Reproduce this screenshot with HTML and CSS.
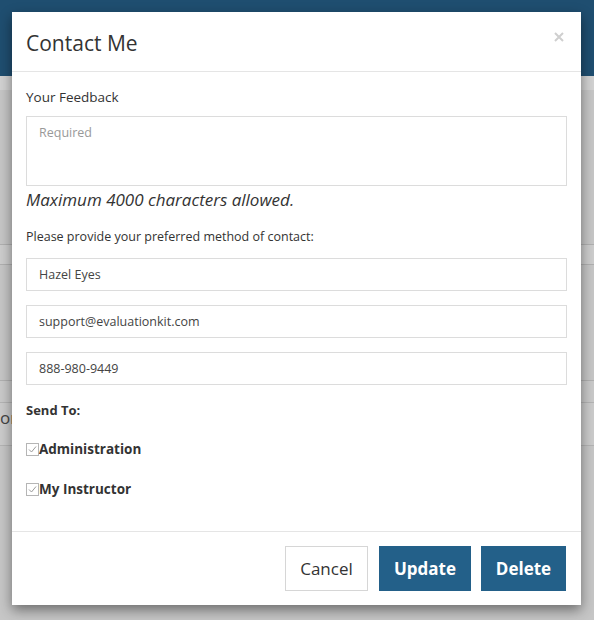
FILE: index.html
```html
<!DOCTYPE html>
<html lang="en">
<head>
<meta charset="utf-8">
<title>Contact Me</title>
<link rel="stylesheet" href="styles.css">
</head>
<body>
<div class="page">
  <div class="topbar"></div>
  <div class="subbar"></div>
  <div class="spacer-a"></div>
  <div class="row row-a"></div>
  <div class="spacer-b"></div>
  <div class="row row-b"></div>
  <div class="row row-c"><span class="bg-text">or</span></div>
  <div class="rest"></div>
</div>

<div class="modal">
  <div class="modal-header">
    <h4 class="modal-title">Contact Me</h4>
    <span class="close" aria-label="Close">
      <svg width="10" height="10" viewBox="0 0 10 10"><path d="M1 1 L9 9 M9 1 L1 9" stroke="#cfcfcf" stroke-width="2" fill="none"/></svg>
    </span>
  </div>
  <div class="modal-body">
    <div class="label">Your Feedback</div>
    <div class="textarea"><span class="placeholder">Required</span></div>
    <div class="hint">Maximum 4000 characters allowed.</div>
    <div class="prompt">Please provide your preferred method of contact:</div>
    <div class="input">Hazel Eyes</div>
    <div class="input">support@evaluationkit.com</div>
    <div class="input">888-980-9449</div>
    <div class="sendto">Send To:</div>
    <div class="check"><span class="box"><svg width="11" height="11" viewBox="0 0 11 11"><path d="M2 5.5 L4.5 8 L9 2.5" stroke="#9a9a9a" stroke-width="1" fill="none"/></svg></span>Administration</div>
    <div class="check"><span class="box"><svg width="11" height="11" viewBox="0 0 11 11"><path d="M2 5.5 L4.5 8 L9 2.5" stroke="#9a9a9a" stroke-width="1" fill="none"/></svg></span>My Instructor</div>
  </div>
  <div class="modal-footer">
    <button class="btn btn-default">Cancel</button>
    <button class="btn btn-primary">Update</button>
    <button class="btn btn-primary">Delete</button>
  </div>
</div>
</body>
</html>
```
FILE: styles.css
```css
html, body {
  margin: 0;
  padding: 0;
}
body {
  background: #c6c6c6;
  font-family: "Open Sans", "Noto Sans", sans-serif;
  color: #333;
  width: 594px;
  height: 620px;
  overflow: hidden;
  position: relative;
}
.page {
  display: flex;
  flex-direction: column;
}
.topbar {
  height: 76px;
  background: #1f4e70;
}
.subbar {
  height: 14px;
  background: #d2d2d2;
}
.spacer-a {
  height: 154px;
}
.row-a {
  height: 19px;
  border-top: 1px solid #b0b0b0;
  border-bottom: 1px solid #b0b0b0;
  background: #cdcdcd;
}
.spacer-b {
  height: 115px;
}
.row-b {
  height: 21px;
  border-top: 1px solid #b0b0b0;
  background: #c9c9c9;
}
.row-c {
  height: 42px;
  border-top: 1px solid #b4b4b4;
  border-bottom: 1px solid #b4b4b4;
  background: #cbcbcb;
  display: flex;
  align-items: flex-start;
}
.bg-text {
  font-size: 17px;
  line-height: 24px;
  margin-top: 3px;
  color: #444;
  margin-left: 0;
}
.rest {
  flex: 1;
}

.modal {
  position: absolute;
  left: 12px;
  top: 12px;
  width: 569px;
  height: 593px;
  background: #fff;
  box-shadow: 0 5px 12px rgba(0, 0, 0, 0.45);
  display: flex;
  flex-direction: column;
}
.modal-header {
  height: 59px;
  border-bottom: 1px solid #e5e5e5;
  display: flex;
  align-items: flex-start;
  justify-content: space-between;
  padding: 0 17px 0 14px;
}
.modal-title {
  margin: 17px 0 0 0;
  font-size: 21px;
  font-weight: 400;
  line-height: 28px;
  color: #333;
}
.close {
  margin-top: 20px;
  display: flex;
}
.modal-body {
  padding: 15px 14px 0 14px;
  flex: 1;
  display: flex;
  flex-direction: column;
}
.label {
  font-size: 13.5px;
  line-height: 20px;
}
.textarea {
  margin-top: 9px;
  height: 68px;
  border: 1px solid #dcdcdc;
  padding: 0 12px;
}
.placeholder {
  display: block;
  margin-top: 7px;
  font-size: 12.5px;
  line-height: 18px;
  color: #999;
}
.hint {
  margin-top: 2px;
  font-size: 17px;
  font-style: italic;
  line-height: 24px;
  color: #333;
}
.prompt {
  margin-top: 16px;
  font-size: 12.5px;
  line-height: 18px;
}
.input {
  margin-top: 12px;
  height: 31px;
  border: 1px solid #dcdcdc;
  padding: 0 12px;
  font-size: 12.5px;
  line-height: 31px;
  color: #444;
}
.input + .input {
  margin-top: 14px;
}
.sendto {
  margin-top: 16px;
  font-size: 13px;
  font-weight: 700;
  line-height: 18px;
}
.check {
  margin-top: 21px;
  font-size: 13.5px;
  font-weight: 700;
  line-height: 18px;
  display: flex;
  align-items: center;
}
.check + .check {
  margin-top: 22px;
}
.box {
  width: 11px;
  height: 11px;
  border: 1px solid #b5b5b5;
  display: flex;
  margin-right: 0;
}
.modal-footer {
  height: 74px;
  border-top: 1px solid #e5e5e5;
  display: flex;
  justify-content: flex-end;
  align-items: flex-start;
  gap: 11px;
  padding: 14px 15px 0 0;
  box-sizing: border-box;
}
.btn {
  height: 45px;
  font-family: "Open Sans", "Noto Sans", sans-serif;
  font-size: 17px;
  padding: 0;
  cursor: pointer;
}
.btn-default {
  width: 83px;
  background: #fff;
  border: 1px solid #d6d6d6;
  color: #333;
}
.btn-primary {
  background: #236089;
  border: none;
  color: #fff;
  font-weight: 700;
}
.btn-primary:nth-child(2) {
  width: 92px;
}
.btn-primary:nth-child(3) {
  width: 85px;
  margin-left: -1px;
}
```
